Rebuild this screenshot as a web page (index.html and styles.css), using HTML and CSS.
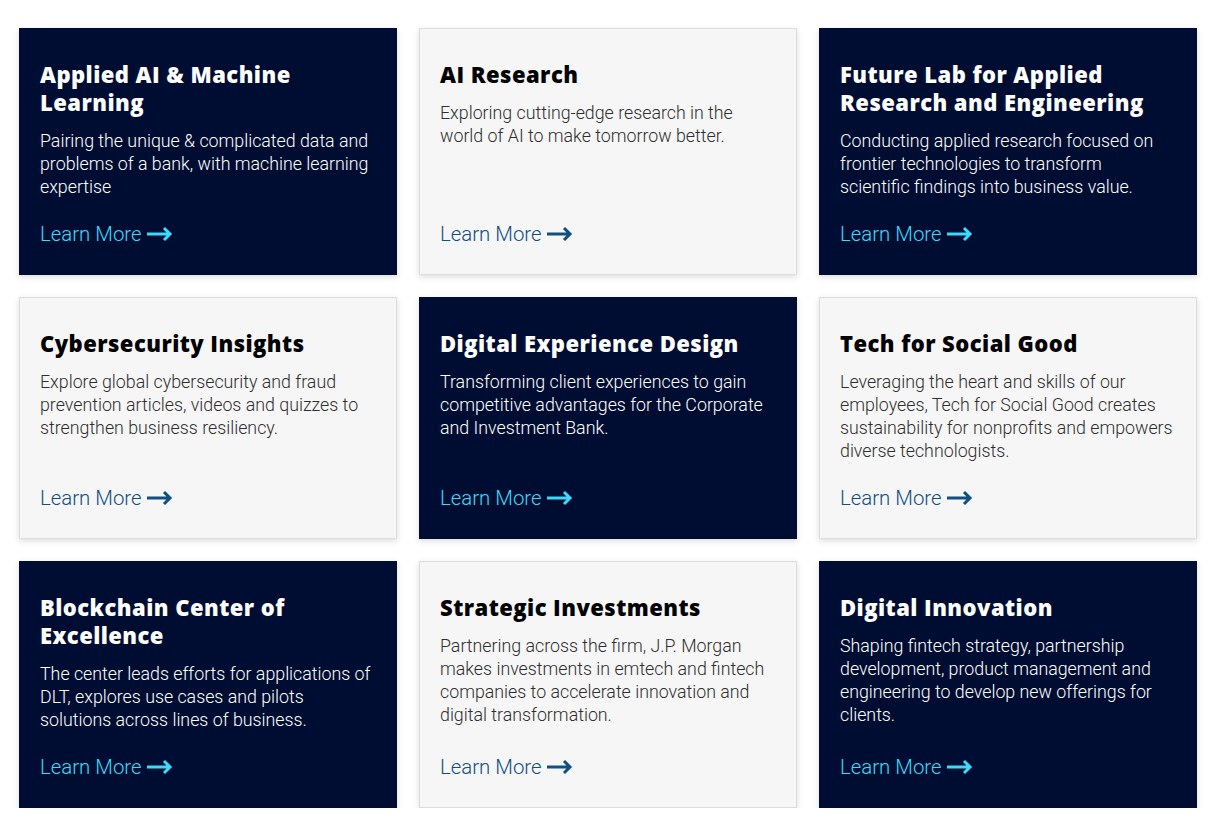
FILE: index.html
```html
<!DOCTYPE html>
<html lang="en">
<head>
<meta charset="utf-8">
<title>Cards</title>
<link rel="stylesheet" href="styles.css">
</head>
<body>
<main class="grid">
  <article class="card dark">
    <h2 class="card-title">Applied AI &amp; Machine Learning</h2>
    <p class="card-text">Pairing the unique &amp; complicated data and problems of a bank, with machine learning expertise</p>
    <a class="card-link" href="#">Learn More <svg class="arrow" viewBox="0 0 27 16" width="27" height="16"><path d="M1 8H24M18 2L24 8L18 14" fill="none" stroke="currentColor" stroke-width="3"/></svg></a>
  </article>
  <article class="card light">
    <h2 class="card-title">AI Research</h2>
    <p class="card-text">Exploring cutting-edge research in the world of AI to make tomorrow better.</p>
    <a class="card-link" href="#">Learn More <svg class="arrow" viewBox="0 0 27 16" width="27" height="16"><path d="M1 8H24M18 2L24 8L18 14" fill="none" stroke="currentColor" stroke-width="3"/></svg></a>
  </article>
  <article class="card dark">
    <h2 class="card-title">Future Lab for Applied Research and Engineering</h2>
    <p class="card-text">Conducting applied research focused on frontier technologies to transform scientific findings into business value.</p>
    <a class="card-link" href="#">Learn More <svg class="arrow" viewBox="0 0 27 16" width="27" height="16"><path d="M1 8H24M18 2L24 8L18 14" fill="none" stroke="currentColor" stroke-width="3"/></svg></a>
  </article>
  <article class="card light">
    <h2 class="card-title">Cybersecurity Insights</h2>
    <p class="card-text">Explore global cybersecurity and fraud prevention articles, videos and quizzes to strengthen business resiliency.</p>
    <a class="card-link" href="#">Learn More <svg class="arrow" viewBox="0 0 27 16" width="27" height="16"><path d="M1 8H24M18 2L24 8L18 14" fill="none" stroke="currentColor" stroke-width="3"/></svg></a>
  </article>
  <article class="card dark">
    <h2 class="card-title">Digital Experience Design</h2>
    <p class="card-text">Transforming client experiences to gain competitive advantages for the Corporate and Investment Bank.</p>
    <a class="card-link" href="#">Learn More <svg class="arrow" viewBox="0 0 27 16" width="27" height="16"><path d="M1 8H24M18 2L24 8L18 14" fill="none" stroke="currentColor" stroke-width="3"/></svg></a>
  </article>
  <article class="card light">
    <h2 class="card-title">Tech for Social Good</h2>
    <p class="card-text">Leveraging the heart and skills of our employees, Tech for Social Good creates sustainability for nonprofits and empowers diverse technologists.</p>
    <a class="card-link" href="#">Learn More <svg class="arrow" viewBox="0 0 27 16" width="27" height="16"><path d="M1 8H24M18 2L24 8L18 14" fill="none" stroke="currentColor" stroke-width="3"/></svg></a>
  </article>
  <article class="card dark">
    <h2 class="card-title">Blockchain Center of Excellence</h2>
    <p class="card-text">The center leads efforts for applications of DLT, explores use cases and pilots solutions across lines of business.</p>
    <a class="card-link" href="#">Learn More <svg class="arrow" viewBox="0 0 27 16" width="27" height="16"><path d="M1 8H24M18 2L24 8L18 14" fill="none" stroke="currentColor" stroke-width="3"/></svg></a>
  </article>
  <article class="card light">
    <h2 class="card-title">Strategic Investments</h2>
    <p class="card-text">Partnering across the firm, J.P. Morgan makes investments in emtech and fintech companies to accelerate innovation and digital transformation.</p>
    <a class="card-link" href="#">Learn More <svg class="arrow" viewBox="0 0 27 16" width="27" height="16"><path d="M1 8H24M18 2L24 8L18 14" fill="none" stroke="currentColor" stroke-width="3"/></svg></a>
  </article>
  <article class="card dark">
    <h2 class="card-title">Digital Innovation</h2>
    <p class="card-text">Shaping fintech strategy, partnership development, product management and engineering to develop new offerings for clients.</p>
    <a class="card-link" href="#">Learn More <svg class="arrow" viewBox="0 0 27 16" width="27" height="16"><path d="M1 8H24M18 2L24 8L18 14" fill="none" stroke="currentColor" stroke-width="3"/></svg></a>
  </article>
</main>
</body>
</html>
```

FILE: styles.css
```css
* { box-sizing: border-box; }

html, body {
  margin: 0;
  padding: 0;
  background: #ffffff;
}

body {
  font-family: "Open Sans", "Noto Sans", sans-serif;
}

.grid {
  display: grid;
  grid-template-columns: repeat(3, 378px);
  column-gap: 22px;
  row-gap: 22px;
  padding: 28px 0 0 19px;
}

.card {
  display: flex;
  flex-direction: column;
  padding: 31px 22px 26px 20px;
  border: 1px solid #dcdcdc;
  box-shadow: 0 2px 6px rgba(0, 0, 0, 0.14);
}

.card.dark {
  background: #000d33;
  border-color: #000d33;
  color: #ffffff;
}

.card.light {
  background: #f6f6f6;
  color: #2e2e2e;
}

.card-title {
  margin: 0;
  font-family: "Open Sans", sans-serif;
  font-weight: 800;
  font-size: 22px;
  line-height: 28px;
  letter-spacing: 0.45px;
}

.light .card-title { color: #000000; }

.card-text {
  margin: 13px 0 0 0;
  font-family: "Roboto", sans-serif;
  font-weight: 300;
  font-size: 17.8px;
  line-height: 23px;
}

.card-link {
  margin-top: auto;
  padding-top: 22px;
  display: flex;
  align-items: center;
  gap: 4px;
  font-family: "Roboto", sans-serif;
  font-weight: 300;
  font-size: 20.4px;
  line-height: 28px;
  text-decoration: none;
}

.dark .card-link { color: #3bdaf7; }
.light .card-link { color: #0f4f83; }

.arrow { display: block; flex: none; }
```
